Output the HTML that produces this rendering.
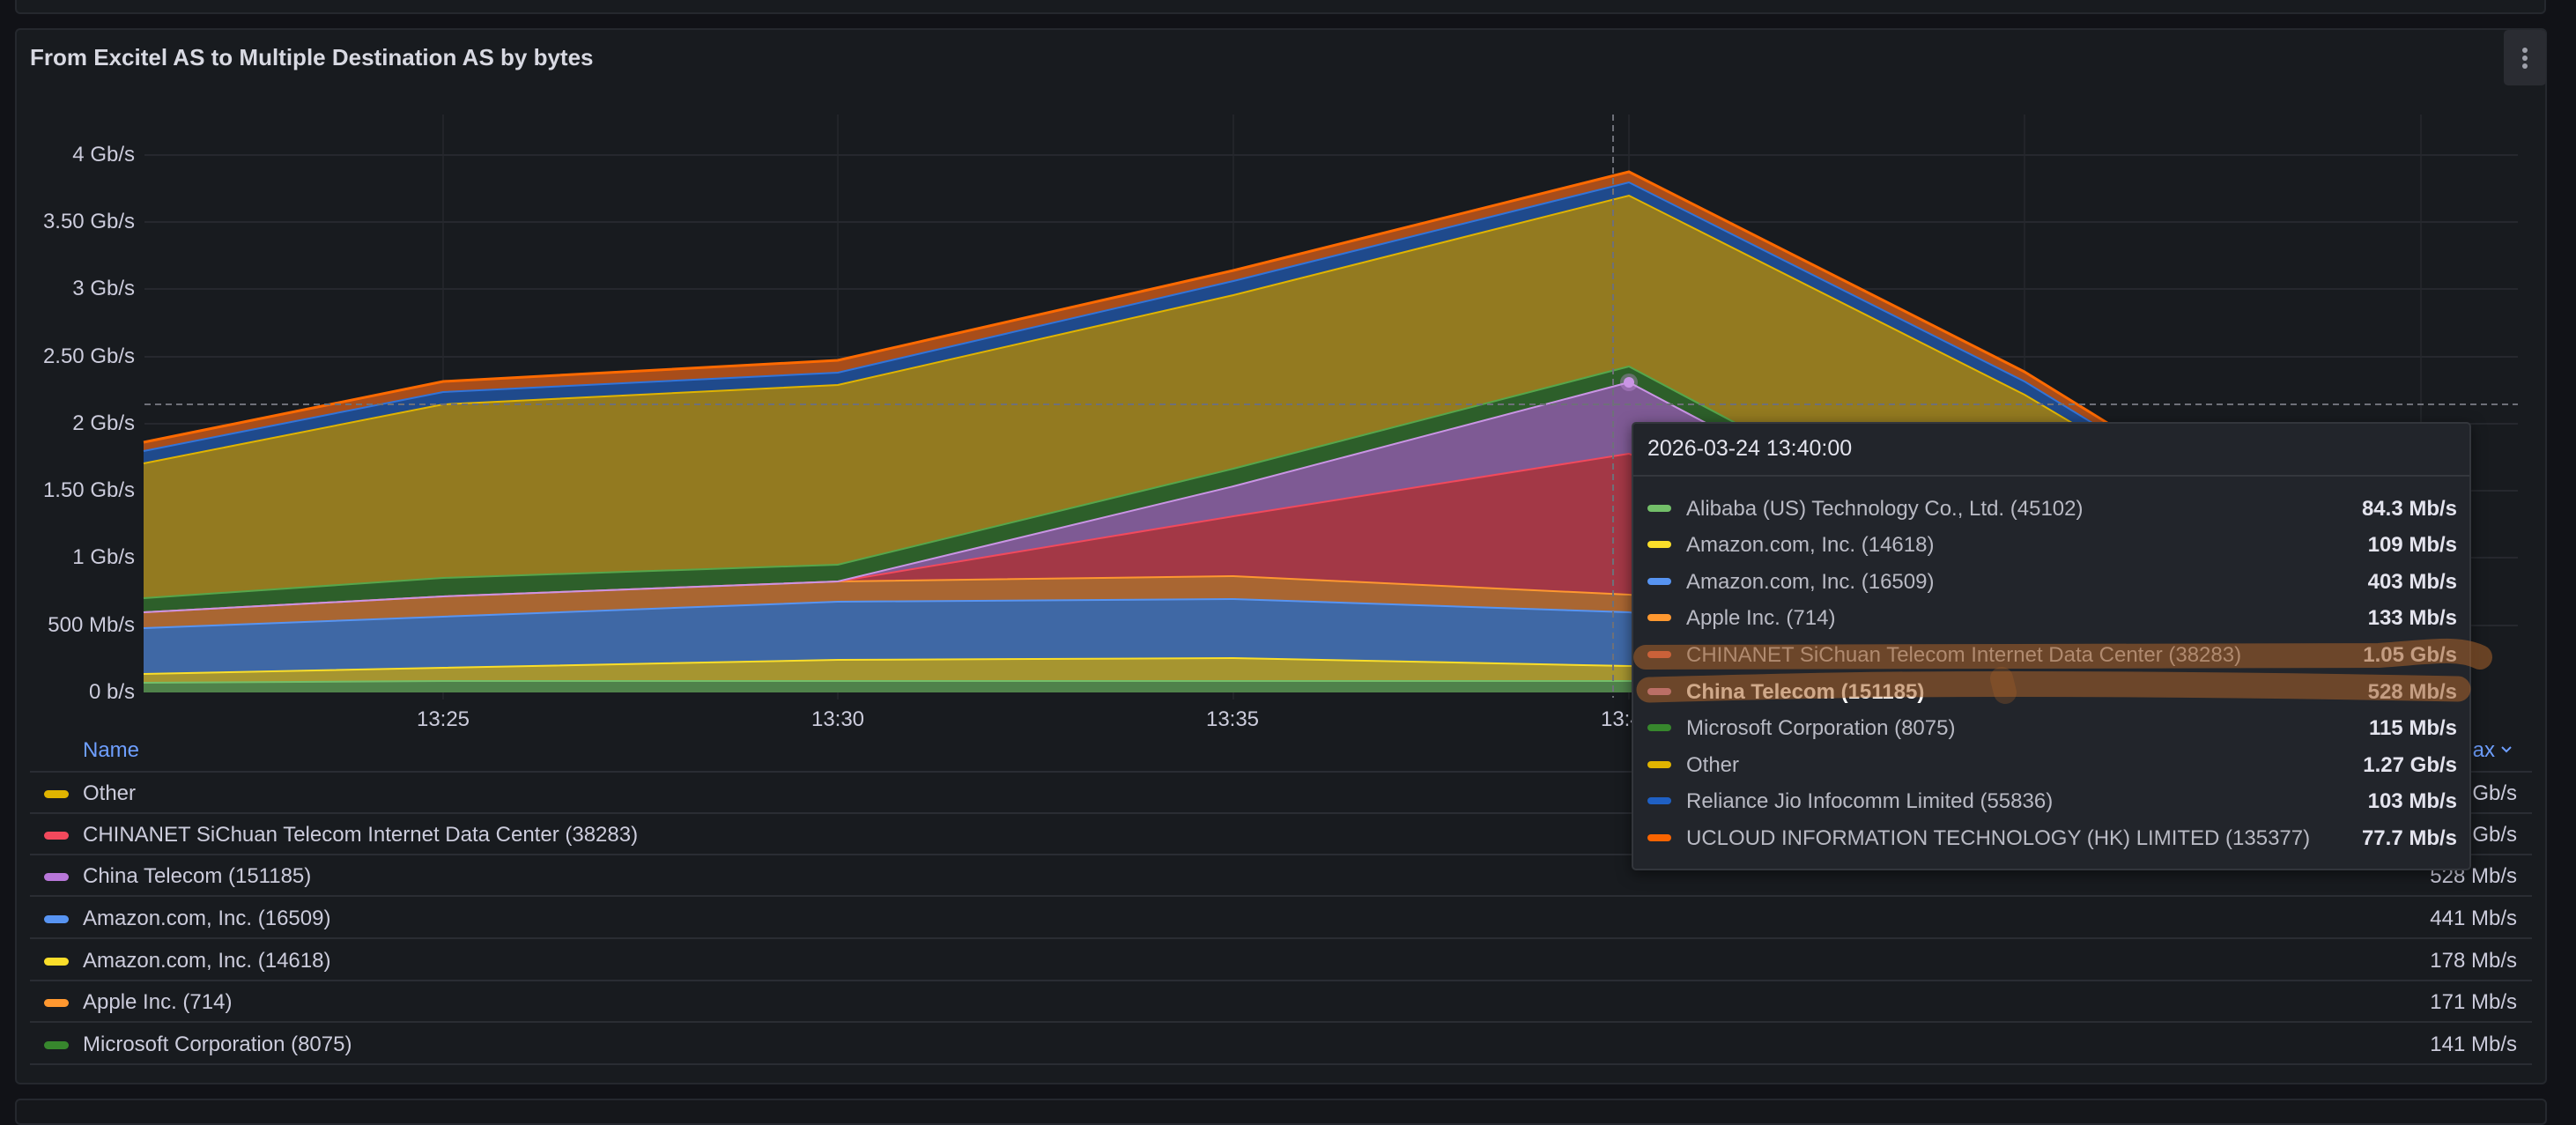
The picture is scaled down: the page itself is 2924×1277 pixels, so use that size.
<!DOCTYPE html>
<html><head><meta charset="utf-8"><style>
*{margin:0;padding:0;box-sizing:border-box}
html,body{width:2924px;height:1252px;overflow:hidden;background:#111217;font-family:"Liberation Sans",sans-serif;color:#ccccdc}
.abs{position:absolute}
.panel{position:absolute;background:#181b1f;border:2px solid #25282e;border-radius:6px}
.yl{position:absolute;right:2771px;font-size:24px;color:#ccccdc;text-align:right;line-height:24px}
.xl{position:absolute;top:803px;font-size:24px;color:#ccccdc;width:100px;text-align:center;margin-left:-50px}
.lrow{position:absolute;left:34px;width:2840px;height:47px;border-bottom:2px solid #2a2d33}
.lrow .sw{position:absolute;left:16px;top:20px;width:28px;height:9px;border-radius:5px}
.lrow .nm{position:absolute;left:60px;top:10px;font-size:24px;color:#ccccdc}
.lrow .v{position:absolute;right:17px;top:10px;font-size:24px;color:#ccccdc}
.tt{position:absolute;left:1852px;top:479px;width:953px;height:509px;background:#22252b;border:2px solid #33363c;border-radius:5px;box-shadow:0 4px 16px rgba(0,0,0,.5)}
.tr{position:absolute;left:0;width:951px;height:40px}
.tr .sw{position:absolute;left:16px;top:16px;width:27px;height:8px;border-radius:4px}
.tr .nm{position:absolute;left:60px;top:7px;font-size:24px;color:#b9bac4}
.tr .v{position:absolute;right:16px;top:7px;font-size:24px;color:#e4e4ee;font-weight:bold}
</style></head><body>
<div class="panel" style="left:17px;top:-20px;width:2873px;height:36px"></div>
<div class="panel" style="left:17px;top:32px;width:2874px;height:1199px"></div>
<div class="panel" style="left:17px;top:1247px;width:2874px;height:30px;background:#15171b"></div>
<div class="abs" style="left:34px;top:50px;font-size:26px;font-weight:bold;color:#d8d9e2">From Excitel AS to Multiple Destination AS by bytes</div>
<div class="abs" style="left:2842px;top:34px;width:48px;height:63px;background:#2a2c32;border-radius:5px"></div>
<svg class="abs" style="left:2842px;top:34px" width="48" height="63"><circle cx="24" cy="23" r="3" fill="#9fa1ab"/><circle cx="24" cy="32" r="3" fill="#9fa1ab"/><circle cx="24" cy="41" r="3" fill="#9fa1ab"/></svg>

<div class="yl" style="top:164px">4 Gb/s</div>
<div class="yl" style="top:240px">3.50 Gb/s</div>
<div class="yl" style="top:316px">3 Gb/s</div>
<div class="yl" style="top:393px">2.50 Gb/s</div>
<div class="yl" style="top:469px">2 Gb/s</div>
<div class="yl" style="top:545px">1.50 Gb/s</div>
<div class="yl" style="top:621px">1 Gb/s</div>
<div class="yl" style="top:698px">500 Mb/s</div>
<div class="yl" style="top:774px">0 b/s</div>

<svg class="abs" style="left:0;top:0" width="2924" height="800">
<g stroke="#2a2d33" stroke-width="1.5">
<line x1="164" y1="176" x2="2858" y2="176"/><line x1="164" y1="252" x2="2858" y2="252"/><line x1="164" y1="328" x2="2858" y2="328"/><line x1="164" y1="405" x2="2858" y2="405"/><line x1="164" y1="481" x2="2858" y2="481"/><line x1="164" y1="557" x2="2858" y2="557"/><line x1="164" y1="633" x2="2858" y2="633"/><line x1="164" y1="710" x2="2858" y2="710"/>
</g>
<g stroke="#25282d" stroke-width="1.5">
<line x1="503" y1="130" x2="503" y2="794"/><line x1="951" y1="130" x2="951" y2="794"/><line x1="1400" y1="130" x2="1400" y2="794"/><line x1="1849" y1="130" x2="1849" y2="794"/><line x1="2298" y1="130" x2="2298" y2="794"/><line x1="2748" y1="130" x2="2748" y2="794"/>
</g>
<polygon fill="#4f824a" points="163,775 503,773 951,773 1400,773 1849,773 2298,774 2748,780 2748,786 163,786"/>
<polygon fill="#a69530" points="163,765 503,758 951,749 1400,747 1849,756 2298,762 2748,775 2748,780 2298,774 1849,773 1400,773 951,773 503,773 163,775"/>
<polygon fill="#3f68a5" points="163,713 503,700 951,683 1400,680 1849,695 2298,745 2748,765 2748,775 2298,762 1849,756 1400,747 951,749 503,758 163,765"/>
<polygon fill="#a96632" points="163,695 503,677 951,660 1400,654 1849,675 2298,718 2748,760 2748,765 2298,745 1849,695 1400,680 951,683 503,700 163,713"/>
<polygon fill="#a33846" points="163,695 503,677 951,660 1400,586 1849,515 2298,700 2748,755 2748,760 2298,718 1849,675 1400,654 951,660 503,677 163,695"/>
<polygon fill="#7e5a94" points="163,695 503,677 951,660 1400,552 1849,434 2298,671 2748,750 2748,755 2298,700 1849,515 1400,586 951,660 503,677 163,695"/>
<polygon fill="#2d5f2a" points="163,679 503,656 951,641 1400,532 1849,416 2298,654 2748,745 2748,750 2298,671 1849,434 1400,552 951,660 503,677 163,695"/>
<polygon fill="#937a20" points="163,526 503,459 951,437 1400,335 1849,222 2298,448 2748,715 2748,745 2298,654 1849,416 1400,532 951,641 503,656 163,679"/>
<polygon fill="#1f4a8c" points="163,512 503,445 951,423 1400,319 1849,207 2298,433 2748,708 2748,715 2298,448 1849,222 1400,335 951,437 503,459 163,526"/>
<polygon fill="#a84d1a" points="163,502 503,433 951,409 1400,307 1849,195 2298,422 2748,700 2748,708 2298,433 1849,207 1400,319 951,423 503,445 163,512"/>
<g fill="none" stroke-width="2">
<polyline stroke="#73bf69" points="163,775 503,773 951,773 1400,773 1849,773 2298,774 2748,780"/>
<polyline stroke="#fade2a" points="163,765 503,758 951,749 1400,747 1849,756 2298,762 2748,775"/>
<polyline stroke="#5794f2" points="163,713 503,700 951,683 1400,680 1849,695 2298,745 2748,765"/>
<polyline stroke="#ff9830" points="163,695 503,677 951,660 1400,654 1849,675 2298,718 2748,760"/>
<polyline stroke="#f2495c" points="163,695 503,677 951,660 1400,586 1849,515 2298,700 2748,755"/>
<polyline stroke="#ca95e5" points="163,695 503,677 951,660 1400,552 1849,434 2298,671 2748,750"/>
<polyline stroke="#56a64b" points="163,679 503,656 951,641 1400,532 1849,416 2298,654 2748,745"/>
<polyline stroke="#e0b400" points="163,526 503,459 951,437 1400,335 1849,222 2298,448 2748,715"/>
<polyline stroke="#3274d9" points="163,512 503,445 951,423 1400,319 1849,207 2298,433 2748,708"/>
<polyline stroke="#ff6a00" stroke-width="3" points="163,502 503,433 951,409 1400,307 1849,195 2298,422 2748,700"/>
</g>
<line x1="164" y1="459" x2="2858" y2="459" stroke="#6e7079" stroke-width="2" stroke-dasharray="7,5"/>
<line x1="1831" y1="130" x2="1831" y2="792" stroke="#6e7079" stroke-width="2" stroke-dasharray="7,5"/>
<circle cx="1849" cy="434" r="10" fill="#ca95e5" opacity=".35"/>
<circle cx="1849" cy="434" r="6" fill="#ca95e5"/>
</svg>

<div class="xl" style="left:503px">13:25</div>
<div class="xl" style="left:951px">13:30</div>
<div class="xl" style="left:1399px">13:35</div>
<div class="xl" style="left:1847px">13:40</div>

<div class="abs" style="left:94px;top:838px;font-size:24px;color:#6e9fff">Name</div>
<div class="abs" style="right:92px;top:838px;font-size:24px;color:#6e9fff">Max</div>
<svg class="abs" style="left:2838px;top:846px" width="14" height="10"><path d="M2 2 L7 7 L12 2" fill="none" stroke="#6e9fff" stroke-width="2"/></svg>
<div class="abs" style="left:34px;top:875px;width:2840px;height:2px;background:#2a2d33"></div>
<div class="lrow" style="top:877px"><div class="sw" style="background:#e0b400"></div><div class="nm">Other</div><div class="v">1.81 Gb/s</div></div>
<div class="lrow" style="top:924px"><div class="sw" style="background:#f2495c"></div><div class="nm">CHINANET SiChuan Telecom Internet Data Center (38283)</div><div class="v">1.05 Gb/s</div></div>
<div class="lrow" style="top:971px"><div class="sw" style="background:#b877d9"></div><div class="nm">China Telecom (151185)</div><div class="v">528 Mb/s</div></div>
<div class="lrow" style="top:1019px"><div class="sw" style="background:#5794f2"></div><div class="nm">Amazon.com, Inc. (16509)</div><div class="v">441 Mb/s</div></div>
<div class="lrow" style="top:1067px"><div class="sw" style="background:#fade2a"></div><div class="nm">Amazon.com, Inc. (14618)</div><div class="v">178 Mb/s</div></div>
<div class="lrow" style="top:1114px"><div class="sw" style="background:#ff9830"></div><div class="nm">Apple Inc. (714)</div><div class="v">171 Mb/s</div></div>
<div class="lrow" style="top:1162px"><div class="sw" style="background:#37872d"></div><div class="nm">Microsoft Corporation (8075)</div><div class="v">141 Mb/s</div></div>

<div class="tt">
<div class="abs" style="left:16px;top:14px;font-size:25px;color:#e4e4ee">2026-03-24 13:40:00</div>
<div class="abs" style="left:0;top:58px;width:949px;height:2px;background:#34373d"></div>
<div class="tr" style="top:76px"><div class="sw" style="background:#73bf69"></div><div class="nm">Alibaba (US) Technology Co., Ltd. (45102)</div><div class="v">84.3 Mb/s</div></div>
<div class="tr" style="top:117px"><div class="sw" style="background:#fade2a"></div><div class="nm">Amazon.com, Inc. (14618)</div><div class="v">109 Mb/s</div></div>
<div class="tr" style="top:159px"><div class="sw" style="background:#5794f2"></div><div class="nm">Amazon.com, Inc. (16509)</div><div class="v">403 Mb/s</div></div>
<div class="tr" style="top:200px"><div class="sw" style="background:#ff9830"></div><div class="nm">Apple Inc. (714)</div><div class="v">133 Mb/s</div></div>
<div class="tr" style="top:242px"><div class="sw" style="background:#f2604c"></div><div class="nm">CHINANET SiChuan Telecom Internet Data Center (38283)</div><div class="v">1.05 Gb/s</div></div>
<div class="tr" style="top:284px"><div class="sw" style="background:#d07fb0"></div><div class="nm" style="color:#fff;font-weight:bold">China Telecom (151185)</div><div class="v">528 Mb/s</div></div>
<div class="tr" style="top:325px"><div class="sw" style="background:#37872d"></div><div class="nm">Microsoft Corporation (8075)</div><div class="v">115 Mb/s</div></div>
<div class="tr" style="top:367px"><div class="sw" style="background:#e0b400"></div><div class="nm">Other</div><div class="v">1.27 Gb/s</div></div>
<div class="tr" style="top:408px"><div class="sw" style="background:#1f60c4"></div><div class="nm">Reliance Jio Infocomm Limited (55836)</div><div class="v">103 Mb/s</div></div>
<div class="tr" style="top:450px"><div class="sw" style="background:#fa6400"></div><div class="nm">UCLOUD INFORMATION TECHNOLOGY (HK) LIMITED (135377)</div><div class="v">77.7 Mb/s</div></div>
</div>
<svg class="abs" style="left:0;top:0" width="2924" height="1252">
<g fill="none" stroke="rgb(170,99,41)" stroke-opacity=".55" stroke-linecap="round" stroke-linejoin="round">
<path d="M1868 746 C2200 744 2500 744 2700 744 C2760 740 2790 734 2815 746" stroke-width="28"/>
<path d="M1872 783 C1950 781 2050 778 2150 777 C2300 776 2500 776 2790 782" stroke-width="29"/>
<path d="M2272 770 L2276 786" stroke-width="26" stroke-opacity=".3"/>
</g>
</svg>
</body></html>
